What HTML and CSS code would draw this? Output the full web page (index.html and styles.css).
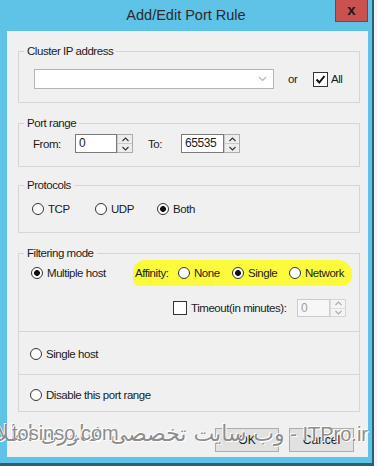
FILE: index.html
```html
<!DOCTYPE html>
<html lang="en">
<head>
    <meta charset="UTF-8">
    <meta name="viewport" content="width=device-width, initial-scale=1.0">
    <title>Add/Edit Port Rule</title>
    <link rel="stylesheet" href="styles.css">
</head>
<body>
    <div class="window">
        <div class="titlebar">
            <span></span>
            <h1 class="title">Add/Edit Port Rule</h1>
            <button class="close">x</button>
        </div>

        <div class="client">
            <!-- Cluster IP -->
            <fieldset class="group group-cluster">
                <legend>Cluster IP address</legend>
                <div class="row">
                    <div class="combo">
                        <svg width="9" height="6" viewBox="0 0 9 6"><polyline points="1,1 4.5,4.5 8,1" fill="none" stroke="#b5b5b5" stroke-width="1.2"/></svg>
                    </div>
                    <span class="or">or</span>
                    <span class="check">
                        <span class="box box-big"><svg width="11" height="11" viewBox="0 0 11 11"><polyline points="1.5,5.5 4.3,8.5 9.5,2" fill="none" stroke="#111" stroke-width="2"/></svg></span>
                        All
                    </span>
                </div>
            </fieldset>

            <!-- Port range -->
            <fieldset class="group group-port">
                <legend>Port range</legend>
                <div class="row">
                    <span class="lbl lbl-from">From:</span>
                    <div class="spin spin-from">
                        <span class="spin-text">0</span>
                        <span class="spin-btns">
                            <span class="spin-btn"><svg width="7" height="5" viewBox="0 0 7 5"><polyline points="0.5,4 3.5,1 6.5,4" fill="none" stroke="#333" stroke-width="1.1"/></svg></span>
                            <span class="spin-btn"><svg width="7" height="5" viewBox="0 0 7 5"><polyline points="0.5,1 3.5,4 6.5,1" fill="none" stroke="#333" stroke-width="1.1"/></svg></span>
                        </span>
                    </div>
                    <span class="lbl lbl-to">To:</span>
                    <div class="spin spin-to">
                        <span class="spin-text">65535</span>
                        <span class="spin-btns">
                            <span class="spin-btn"><svg width="7" height="5" viewBox="0 0 7 5"><polyline points="0.5,4 3.5,1 6.5,4" fill="none" stroke="#333" stroke-width="1.1"/></svg></span>
                            <span class="spin-btn"><svg width="7" height="5" viewBox="0 0 7 5"><polyline points="0.5,1 3.5,4 6.5,1" fill="none" stroke="#333" stroke-width="1.1"/></svg></span>
                        </span>
                    </div>
                </div>
            </fieldset>

            <!-- Protocols -->
            <fieldset class="group group-proto">
                <legend>Protocols</legend>
                <div class="row">
                    <span class="opt opt-tcp"><span class="radio"></span>TCP</span>
                    <span class="opt opt-udp"><span class="radio"></span>UDP</span>
                    <span class="opt"><span class="radio on"></span>Both</span>
                </div>
            </fieldset>

            <!-- Filtering mode -->
            <fieldset class="group group-filter">
                <legend>Filtering mode</legend>
                <div class="section section-multi">
                    <div class="row row-multi">
                        <span class="opt opt-multi"><span class="radio on"></span>Multiple host</span>
                        <div class="affinity">
                            <span class="aff-label">Affinity:</span>
                            <span class="opt opt-none"><span class="radio"></span>None</span>
                            <span class="opt opt-single"><span class="radio on"></span>Single</span>
                            <span class="opt"><span class="radio"></span>Network</span>
                        </div>
                    </div>
                    <div class="row row-timeout">
                        <span class="box"></span>
                        <span class="timeout-label">Timeout(in minutes):</span>
                        <div class="spin spin-timeout disabled">
                            <span class="spin-text">0</span>
                            <span class="spin-btns">
                                <span class="spin-btn"><svg width="7" height="5" viewBox="0 0 7 5"><polyline points="0.5,4 3.5,1 6.5,4" fill="none" stroke="#aaa" stroke-width="1.1"/></svg></span>
                                <span class="spin-btn"><svg width="7" height="5" viewBox="0 0 7 5"><polyline points="0.5,1 3.5,4 6.5,1" fill="none" stroke="#aaa" stroke-width="1.1"/></svg></span>
                            </span>
                        </div>
                    </div>
                </div>
                <div class="section section-single">
                    <span class="opt"><span class="radio"></span>Single host</span>
                </div>
                <div class="section section-disable">
                    <span class="opt"><span class="radio"></span>Disable this port range</span>
                </div>
            </fieldset>

            <div class="buttons">
                <button class="btn btn-ok">OK</button>
                <button class="btn btn-cancel">Cancel</button>
            </div>

            <!-- watermark over the bottom -->
            <div class="watermark" dir="rtl">ITPro.ir - <span class="watermark-fa">وب سایت تخصصی فناوری اطلاعات</span></div>
            <div class="watermark-site">tosinso.com</div>
        </div>
    </div>
</body>
</html>
```

FILE: styles.css
```css
body {
    margin: 0;
    padding: 0;
    background-color: #f4f4f4;
    font-family: "Liberation Sans", Arial, sans-serif;
    font-size: 11.5px;
    letter-spacing: -0.45px;
    color: #1b1b1b;
}

.window {
    width: 372px;
    height: 463px;
    background-color: #5fc3e7;
    border-right: 2px solid #2f5f73;
    border-bottom: 3px solid #2f5f73;
}

.titlebar {
    height: 31px;
    display: grid;
    grid-template-columns: 1fr auto 1fr;
}

.title {
    margin: 0;
    font-size: 14.5px;
    font-weight: normal;
    letter-spacing: 0;
    line-height: 31px;
    color: #2b2b2b;
}

.close {
    justify-self: end;
    align-self: start;
    margin-right: 4px;
    width: 33px;
    height: 22px;
    padding: 0 0 3px;
    background-color: #c9524f;
    border: 1px solid #8e3a38;
    border-top: none;
    font-family: "Liberation Sans", Arial, sans-serif;
    font-size: 15px;
    font-weight: bold;
    color: #1a1a1a;
}

.client {
    position: relative;
    height: 426px;
    margin: 0 4px 0 7px;
    padding: 13px 8px 0 11px;
    box-sizing: border-box;
    background-color: #f0f0f0;
}

/* group boxes */
.group {
    margin: 0;
    padding: 0;
    border: 1px solid #d6d6d6;
    min-width: 0;
}

.group legend {
    margin-left: 5px;
    padding: 0 3px;
    line-height: 14px;
}

.row {
    display: flex;
    align-items: center;
}

.group-cluster .row {
    padding: 11px 0 13px 15px;
}

.group-port {
    margin-top: 13px;
}

.group-port .row {
    padding: 4px 0 13px 14px;
}

.group-proto {
    margin-top: 11px;
}

.group-proto .row {
    padding: 10px 0 16px 13px;
}

.group-filter {
    margin-top: 13px;
}

/* combo */
.combo {
    width: 240px;
    height: 20px;
    box-sizing: border-box;
    border: 1px solid #b4b4b4;
    background-color: white;
    display: flex;
    align-items: center;
    justify-content: flex-end;
    padding-right: 6px;
}

.or {
    margin-left: 14px;
    width: 25px;
}

.check {
    display: flex;
    align-items: center;
    gap: 3px;
}

.box {
    width: 12px;
    height: 12px;
    border: 1px solid #333;
    background-color: white;
    display: flex;
    align-items: center;
    justify-content: center;
}

.box-big {
    width: 13px;
    height: 13px;
}

/* spin boxes */
.lbl-from {
    width: 42px;
}

.lbl-to {
    width: 33px;
    margin-left: 15px;
}

.spin {
    display: flex;
    height: 19px;
}

.spin-from {
    width: 58px;
}

.spin-to {
    width: 59px;
}

.spin-text {
    flex: 1;
    box-sizing: border-box;
    border: 1px solid #7a7a7a;
    background-color: white;
    padding-left: 3px;
    line-height: 17px;
    font-size: 12px;
}

.spin-btns {
    width: 16px;
    display: flex;
    flex-direction: column;
    border: 1px solid #acacac;
    border-left: none;
    box-sizing: border-box;
}

.spin-btn {
    flex: 1;
    display: flex;
    align-items: center;
    justify-content: center;
    background-color: #ededed;
    border-left: 1px solid #c9c9c9;
}

.spin-btn + .spin-btn {
    border-top: 1px solid #c9c9c9;
}

.spin.disabled .spin-text {
    border-color: #cccccc;
    color: #a0a0a0;
    background-color: #f7f7f7;
}

.spin.disabled .spin-btns {
    border-color: #d4d4d4;
}

.spin.disabled .spin-btn {
    background-color: #f4f4f4;
    border-color: #dddddd;
}

/* radio options */
.opt {
    display: flex;
    align-items: center;
    gap: 4px;
    line-height: 14px;
    white-space: nowrap;
}

.radio {
    width: 12px;
    height: 12px;
    flex-shrink: 0;
    box-sizing: border-box;
    border: 1px solid #333;
    border-radius: 50%;
    background-color: white;
}

.radio.on {
    background: radial-gradient(circle, #111 0 2.6px, #fff 3.2px);
}

.opt-tcp {
    width: 63px;
}

.opt-udp {
    width: 62px;
}

/* filtering mode */
.section-multi {
    padding: 0 0 14px 12px;
}

.row-multi {
    height: 26px;
}

.opt-multi {
    width: 102px;
}

.affinity {
    display: flex;
    align-items: center;
    height: 26px;
    padding: 0 8px 0 2px;
    background-color: #fbfb3c;
    border-radius: 12px 14px 10px 6px;
}

.aff-label {
    width: 43px;
}

.opt-none {
    width: 54px;
}

.opt-single {
    width: 57px;
}

.row-timeout {
    margin-top: 13px;
    padding-left: 142px;
}

.timeout-label {
    width: 106px;
    margin-left: 4px;
    white-space: nowrap;
}

.spin-timeout {
    width: 49px;
    height: 18px;
}

.section-single {
    border-top: 1px solid #d6d6d6;
    padding: 15px 0 13px 11px;
}

.section-disable {
    border-top: 1px solid #d6d6d6;
    padding: 13px 0 9px 11px;
}

/* buttons */
.buttons {
    display: flex;
    justify-content: flex-end;
    gap: 10px;
    margin-top: 16px;
    padding-right: 6px;
}

.btn {
    height: 24px;
    width: 64px;
    background-color: #e1e1e1;
    border: 1px solid #adadad;
    font-family: inherit;
    font-size: 12px;
    color: #1b1b1b;
    padding: 0;
}

.btn-cancel {
    width: 65px;
}

/* watermark */
.watermark,
.watermark-site {
    position: absolute;
    top: 391px;
    font-family: "Liberation Sans", "DejaVu Sans", sans-serif;
    font-size: 20px;
    letter-spacing: 0;
    color: #8d8d8d;
    text-shadow: 1px 1px 0 #ffffff, -1px -1px 0 #ffffff;
    white-space: nowrap;
}

.watermark {
    left: 3px;
    right: 0;
    line-height: 24px;
}

.watermark-fa {
    font-family: "DejaVu Sans", sans-serif;
    font-size: 22px;
}

.watermark-site {
    left: 5px;
}
```
